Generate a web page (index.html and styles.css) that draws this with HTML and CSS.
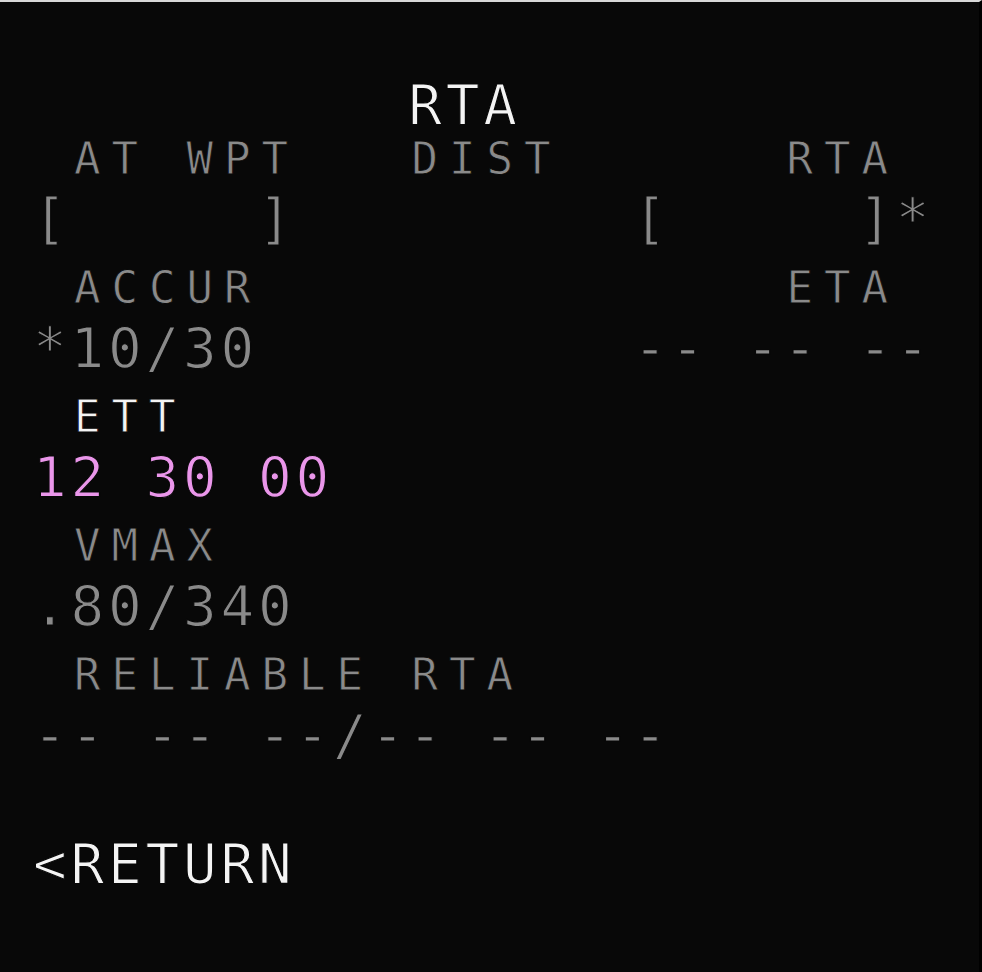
FILE: index.html
```html
<!DOCTYPE html>
<html lang="en">
<head>
  <meta charset="UTF-8" />
  <title>MCDU - RTA</title>
  <link rel="stylesheet" href="styles.css">
</head>
<body>

  <div class="screen">
    <div class="line line-title white">          RTA</div>

    <div class="line line-label"> AT WPT   DIST      RTA</div>
    <div class="line line-data">[     ]         [     ]*</div>

    <div class="line line-label"> ACCUR              ETA</div>
    <div class="line line-data">*10/30          -- -- --</div>

    <div class="line line-label white"> ETT</div>
    <div class="line line-data magenta">12 30 00</div>

    <div class="line line-label"> VMAX</div>
    <div class="line line-data">.80/340</div>

    <div class="line line-label"> RELIABLE RTA</div>
    <div class="line line-data">-- -- --/-- -- --</div>

    <div class="line line-label"></div>
    <div class="line line-data white">&lt;RETURN</div>

    <!-- scratchpad -->
    <div class="line line-data"></div>
  </div>

</body>
</html>
```

FILE: styles.css
```css
html, body {
  margin: 0; padding: 0;
  background: #070707;
  min-height: 100vh;
}
.screen {
  box-sizing: border-box;
  width: 982px;
  height: 972px;
  border-top: 2px solid #d8d8d8;
  border-right: 3px solid #000;
  background: #080808;
  padding: 71px 0 0 33px;
  font-family: 'DejaVu Sans Mono', monospace;
  color: #8a8a8a;
  overflow: hidden;
}
.line {
  white-space: pre;
}
/* big font: 56px -> 33.7px advance, +3.8 spacing = 37.5px cell */
.line-title, .line-data {
  font-size: 56px;
  letter-spacing: 3.8px;
  height: 64.5px;
  line-height: 64.5px;
  /* thin the strokes down to the MCDU look */
  -webkit-text-stroke: 1.2px #080808;
}
.line-title {
  height: 49.4px;
}
/* small font: 44px -> 26.5px advance, +11 spacing = 37.5px cell */
.line-label {
  font-size: 44px;
  letter-spacing: 11px;
  height: 64.5px;
  line-height: 74.5px;
  padding-left: 3.6px;
  -webkit-text-stroke: 0.8px #080808;
}
.white { color: #f4f4f4; }
.magenta { color: #ea96ea; }
```
